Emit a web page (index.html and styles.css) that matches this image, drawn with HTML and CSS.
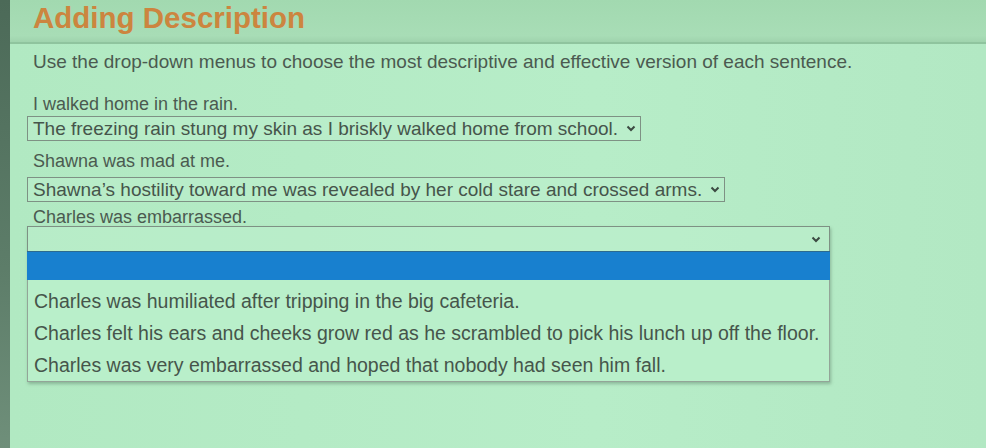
FILE: index.html
```html
<!DOCTYPE html>
<html>
<head>
<meta charset="utf-8">
<link rel="stylesheet" href="styles.css">
</head>
<body>
<div class="screen">
  <div class="strip"></div>
  <div class="main">
    <header class="header"><h1 class="title">Adding Description</h1></header>
    <section class="content">
      <p class="instr">Use the drop-down menus to choose the most descriptive and effective version of each sentence.</p>
      <p class="prompt p1">I walked home in the rain.</p>
      <div class="select s1"><span>The freezing rain stung my skin as I briskly walked home from school.</span><svg class="chev" viewBox="0 0 10 7"><polyline points="1.5,1.5 5,5 8.5,1.5"/></svg></div>
      <p class="prompt p2">Shawna was mad at me.</p>
      <div class="select s2"><span>Shawna’s hostility toward me was revealed by her cold stare and crossed arms.</span><svg class="chev" viewBox="0 0 10 7"><polyline points="1.5,1.5 5,5 8.5,1.5"/></svg></div>
      <p class="prompt p3">Charles was embarrassed.</p>
      <div class="dropdown">
        <div class="select s3"><span></span><svg class="chev" viewBox="0 0 10 7"><polyline points="1.5,1.5 5,5 8.5,1.5"/></svg></div>
        <ul class="list">
          <li class="opt selected"></li>
          <li class="opt first">Charles was humiliated after tripping in the big cafeteria.</li>
          <li class="opt">Charles felt his ears and cheeks grow red as he scrambled to pick his lunch up off the floor.</li>
          <li class="opt">Charles was very embarrassed and hoped that nobody had seen him fall.</li>
        </ul>
      </div>
    </section>
  </div>
</div>
</body>
</html>
```
FILE: styles.css
```css
html, body {
  margin: 0;
  padding: 0;
}
body {
  width: 986px;
  height: 448px;
  overflow: hidden;
  background: #b3eac4;
  font-family: "Liberation Sans", Arial, sans-serif;
  color: #4b5a50;
}
.screen {
  display: flex;
  height: 448px;
}
.strip {
  width: 10px;
  flex: none;
  background: linear-gradient(#4c6a58, #5d7d69 60%, #6f8f7a);
}
.main {
  flex: 1;
  display: flex;
  flex-direction: column;
  background: linear-gradient(90deg, #b1e9c2, #b7edc8 60%, #b2e8c3);
}
.header {
  height: 42px;
  background: linear-gradient(180deg, #a2d9b0, #a8ddb6 85%, #9fd3ad);
  border-bottom: 2px solid #8fc49e;
  padding-left: 23px;
}
.title {
  margin: 0;
  font-size: 29.5px;
  font-weight: bold;
  color: #cc853f;
  line-height: 35px;
}
.content {
  padding: 0 0 0 17px;
}
p {
  margin: 0;
}
.instr {
  font-size: 19px;
  line-height: 22px;
  margin: 7px 0 0 6px;
}
.prompt {
  font-size: 18px;
  line-height: 20px;
  margin-left: 6px;
}
.p1 { margin-top: 21px; }
.p2 { margin-top: 10px; }
.p3 { margin-top: 6px; line-height: 18px; }
.select {
  display: inline-flex;
  align-items: center;
  gap: 8px;
  height: 25px;
  box-sizing: border-box;
  border: 1.5px solid #7e9184;
  padding: 0 4px 0 5px;
  font-size: 19px;
  color: #46554b;
  background: rgba(190, 240, 206, 0.5);
}
.s1 { margin-top: 2px; }
.s2 { margin-top: 6px; }
.chev {
  width: 10px;
  height: 7px;
  fill: none;
  stroke: #3c4a42;
  stroke-width: 2;
  flex: none;
}
.dropdown {
  width: 803px;
  margin-top: 0;
  box-shadow: 1px 2px 3px rgba(60, 90, 70, 0.35);
}
.s3 {
  display: flex;
  width: 100%;
  justify-content: flex-end;
  padding-right: 8px;
  border-bottom: none;
}
.list {
  list-style: none;
  margin: 0;
  padding: 0;
  border: 1px solid #93a598;
  border-top: none;
  background: #b9efca;
}
.opt {
  font-size: 19.5px;
  line-height: 32px;
  height: 32px;
  padding-left: 6px;
  color: #46554b;
}
.opt.first {
  margin-top: 5px;
}
.opt.selected {
  height: 28px;
  background: #1880cf;
  border-top: 1px solid #2c6a8f;
  margin: 0 -1px;
}
```
